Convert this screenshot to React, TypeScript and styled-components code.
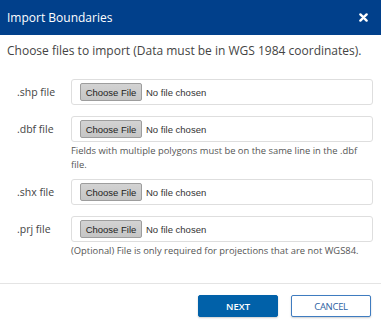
import styled, { createGlobalStyle } from "styled-components";

const GlobalStyle = createGlobalStyle`
  html, body {
    margin: 0;
    padding: 0;
    background: #ffffff;
  }
  body {
    font-family: "Open Sans", "Liberation Sans", sans-serif;
    color: #444444;
  }
`;

const Dialog = styled.div`
  width: 381px;
  height: 329px;
  background: #ffffff;
  display: flex;
  flex-direction: column;
`;

const Header = styled.div`
  height: 35px;
  flex: none;
  background: #01408b;
  display: flex;
  align-items: center;
  justify-content: space-between;
  padding: 0 13px 0 7px;
  color: #ffffff;
  font-size: 12px;
`;

const Close = styled.button`
  border: 0;
  background: none;
  padding: 0;
  display: flex;
  align-items: center;
  cursor: pointer;
`;

const Body = styled.div`
  padding: 9px 8px 0 7px;
  height: 248px;
  box-sizing: border-box;
  flex: none;
`;

const Intro = styled.p`
  margin: 0 0 21px 0;
  font-size: 12px;
  line-height: 14px;
  color: #444444;
  white-space: nowrap;
`;

const Row = styled.div<{ $withHelp?: boolean }>`
  display: grid;
  grid-template-columns: 64px 1fr;
  margin-bottom: ${(p) => (p.$withHelp ? "7px" : "11px")};
`;

const Label = styled.label`
  font-size: 10.5px;
  line-height: 26px;
  padding-left: 10px;
  color: #444444;
`;

const Field = styled.div`
  height: 26px;
  box-sizing: border-box;
  border: 1px solid #dedede;
  border-radius: 3px;
  display: flex;
  align-items: center;
  padding-left: 8px;
  gap: 4px;
`;

const ChooseButton = styled.span`
  height: 18px;
  width: 62px;
  box-sizing: border-box;
  border: 1px solid #9d9d9d;
  border-radius: 2px;
  background: linear-gradient(#d3d3d3, #c5c5c5);
  font-family: "Liberation Sans", Arial, sans-serif;
  font-size: 9.5px;
  color: #222222;
  display: flex;
  align-items: center;
  justify-content: center;
`;

const FileName = styled.span`
  font-family: "Liberation Sans", Arial, sans-serif;
  font-size: 9.5px;
  color: #333333;
`;

const Help = styled.div`
  grid-column: 2;
  font-size: 9.4px;
  line-height: 14px;
  color: #555555;
  padding: 2px 6px 0 0;
`;

const Footer = styled.div`
  border-top: 1px solid #e4e4e4;
  flex: 1;
  display: flex;
  justify-content: flex-end;
  align-items: flex-start;
  gap: 13px;
  padding: 11px 10px 0 0;
`;

const Action = styled.button<{ $primary?: boolean }>`
  width: 80px;
  height: 22px;
  box-sizing: border-box;
  font-family: "Open Sans", sans-serif;
  font-size: 9.5px;
  font-weight: ${(p) => (p.$primary ? 600 : 400)};
  letter-spacing: ${(p) => (p.$primary ? "0" : "-0.3px")};
  border-radius: 2px;
  cursor: pointer;
  background: ${(p) => (p.$primary ? "#0161a9" : "#ffffff")};
  color: ${(p) => (p.$primary ? "#ffffff" : "#2d63a3")};
  border: 1px solid ${(p) => (p.$primary ? "#0161a9" : "#3f7cc0")};
  box-shadow: 0 1px 2px rgba(0, 0, 0, 0.2);
`;

type FileRowProps = { label: string; help?: string };

function FileRow({ label, help }: FileRowProps) {
  return (
    <Row $withHelp={!!help}>
      <Label>{label}</Label>
      <Field>
        <ChooseButton>Choose File</ChooseButton>
        <FileName>No file chosen</FileName>
      </Field>
      {help && <Help>{help}</Help>}
    </Row>
  );
}

export default function App() {
  return (
    <>
      <GlobalStyle />
      <Dialog>
        <Header>
          <span>Import Boundaries</span>
          <Close aria-label="close">
            <svg width="9" height="9" viewBox="0 0 9 9">
              <path d="M1.4 1.4 L7.6 7.6 M7.6 1.4 L1.4 7.6" stroke="#fff" strokeWidth="2.4" strokeLinecap="round" />
            </svg>
          </Close>
        </Header>
        <Body>
          <Intro>Choose files to import (Data must be in WGS 1984 coordinates).</Intro>
          <FileRow label=".shp file" />
          <FileRow
            label=".dbf file"
            help="Fields with multiple polygons must be on the same line in the .dbf file."
          />
          <FileRow label=".shx file" />
          <FileRow
            label=".prj file"
            help="(Optional) File is only required for projections that are not WGS84."
          />
        </Body>
        <Footer>
          <Action $primary>NEXT</Action>
          <Action>CANCEL</Action>
        </Footer>
      </Dialog>
    </>
  );
}
